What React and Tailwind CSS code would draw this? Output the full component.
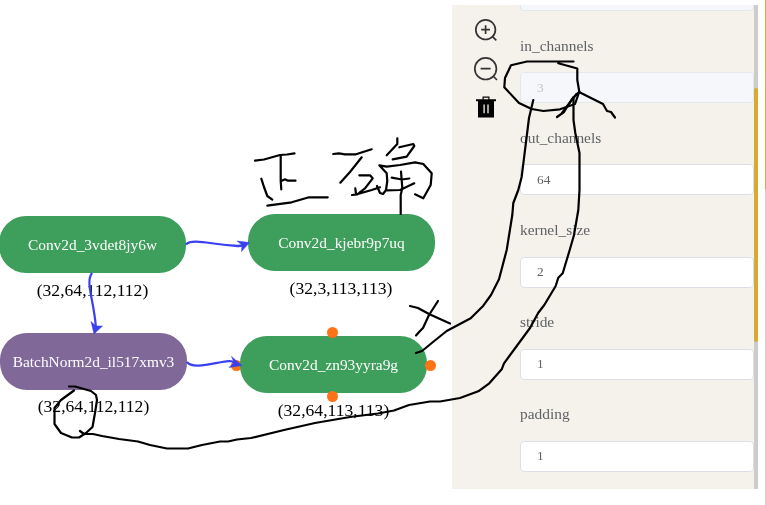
const nodes = [
  { label: 'Conv2d_3vdet8jy6w', shape: '(32,64,112,112)', box: 'left-[-1px] top-[216px] w-[187px] bg-[#3d9f5b]', text: 'left-[1px] top-[280px] w-[183px]' },
  { label: 'Conv2d_kjebr9p7uq', shape: '(32,3,113,113)', box: 'left-[248px] top-[214px] w-[187px] bg-[#3d9f5b]', text: 'left-[250px] top-[278px] w-[182px]' },
  { label: 'BatchNorm2d_il517xmv3', shape: '(32,64,112,112)', box: 'left-[0px] top-[333px] w-[187px] bg-[#806898]', text: 'left-[2px] top-[396px] w-[183px]' },
  { label: 'Conv2d_zn93yyra9g', shape: '(32,64,113,113)', box: 'left-[240px] top-[336px] w-[187px] bg-[#3d9f5b]', text: 'left-[242px] top-[400px] w-[183px]' },
];

const fields = [
  { name: 'in_channels', value: '3', disabled: true },
  { name: 'out_channels', value: '64' },
  { name: 'kernel_size', value: '2' },
  { name: 'stride', value: '1' },
  { name: 'padding', value: '1' },
];

const strokes = [
  // handwriting
  'M255 160.7L264 159.5L280 155L287 154.5L294.5 153.3',
  'M280.7 155V181L281.3 189.3M281.3 181L285 179.3L288 180.7H295.5',
  'M261.3 178.7L264 187L267.3 196L272.3 199.7',
  'M267.3 205.7L291.7 202.3L309 197.3H327.7',
  'M333.3 154L339 153.3L345 154.3H356L371.7 149.3',
  'M361.7 157.3L350 172L340.3 182.7',
  'M359.3 175.3H370L372.7 178.3L365 188.3L357.3 194.3L352 195M355.3 188.3L356 194M357 194.3L371.7 190L380 187.3',
  'M377 186L380 193L383 194L386 190L387.3 181L386.7 173.3L379.3 165.3L386.7 166.7L400 165L415 162.3L423.3 164L431.7 173.3L430.7 185L423.3 198.3L415 194.3',
  'M397.3 138.3V144L386.7 155.3',
  'M399.3 147.3L413.3 144L414.3 146L406.7 156.7L392.7 159.3',
  'M391.7 177.7L402 179.5L409.3 178.5M401 171.7L402.3 188L400.7 195V214M386.7 190.3L400 190L414.3 183.3',
  // cross
  'M410 306L418 308L429 314L440 319L450 323.5',
  'M438 301L429 315L423 328L420 331L416 335.5',
  // tensor shape ring and its long arrow
  'M69 386.5H75L91 391L96 395L97 400L95 413L92.5 427L86 433L79 437.5H72L61 433L54.5 424V408L61 400L74 390.5',
  'M80 431L84 434H93L102 436L119 439L138 441.5L150 445L167 448.5H188L202 445L220 441.5H228L237 439.5L251 438L284 430L315 423L350 417L378 413.5L394 410.5L409 405L430 401.5H440L460 398L478.3 391.3L489.3 383.3L501.7 369.3L504 363.3L530 328L538.3 312.7L544.3 305L555.7 286L558.3 277.7L562.7 273.3L570 249L574 235L578.3 210L579.5 190V153L575.3 133L573.5 120V97',
  // input ring and arrows
  'M573.5 61.5H527L511 65.3L505 78L504.3 87.3L519 103L531.7 109L543.3 111L560 109.3L575 104L579.3 91.7L577.3 80V68.5L558.3 63.3',
  'M416 353L422 351L433 342L446.7 331L470.7 318.3L483.3 305.7L491 295L499 279.3L506.7 250L512.3 215L513.3 203L518.3 190L521.7 176.7L529 118L533.3 100',
  'M557 117L564 112L572 99L579 92L603 104L607 111L611 112L615 117.5',
  'M576.5 94L568 105L562 113',
];

function Dot({ className }) {
  return <span className={'absolute size-[11px] rounded-full bg-[#ff7316] ' + className} />;
}

function Node({ node }) {
  return (
    <>
      <div className={'absolute flex h-[57px] items-center justify-center rounded-[27px] text-[15.4px] text-white ' + node.box}>
        {node.label}
      </div>
      <div className={'absolute text-center text-[17.6px] leading-[20px] text-black ' + node.text}>{node.shape}</div>
    </>
  );
}

function Zoom({ plus }) {
  return (
    <svg className="size-[26px]" viewBox="0 0 26 26" fill="none" stroke="#333" strokeWidth="1.7">
      <circle cx="12.6" cy="12.7" r={plus ? 9.8 : 10.8} />
      <path d={plus ? 'M8.2 12.7H17M12.6 8.3V17.1M19.3 19.3L23.3 23.3' : 'M7.6 12.7H17.6M20 20L24 24'} />
    </svg>
  );
}

function Trash() {
  return (
    <svg className="h-[24px] w-[22px]" viewBox="0 0 22 24">
      <path fill="#000" fillRule="evenodd" d="M7.5 0.5H14.5V3.2H21V5.2H19V21.5H3V5.2H1V3.2H7.5ZM8.7 1.7V3.2H13.3V1.7Z" />
      <path stroke="#d8d5cf" strokeWidth="1.5" d="M9.1 8.5V17.2M13 8.5V17.2" />
    </svg>
  );
}

export default function App() {
  return (
    <div className="relative flex h-[505px] w-[766px] overflow-hidden bg-white font-['Liberation_Serif',serif]">
      <main className="relative h-full w-[452px] shrink-0 will-change-transform">
        <Dot className="left-[231px] top-[360px]" />
        {nodes.map((n) => <Node key={n.label} node={n} />)}
        <Dot className="left-[327px] top-[327px]" />
        <Dot className="left-[327px] top-[391px]" />
        <Dot className="left-[425px] top-[359.5px]" />
        <svg className="absolute inset-0 size-full" fill="none" stroke="#3a40f0" strokeWidth="2.2">
          <path d="M186 244.5C191 239 207 243 222 244.5S239 247 243 245" />
          <path d="M92 273C85 282 94 300 96 328" />
          <path d="M187 362C192 369 210 364 222 362S233 362 237 364" />
          <g fill="#3a40f0" stroke="#3a40f0" strokeWidth="0.5">
            <path d="M249.5 242.5L237 241L242 245L241.5 251.5Z" />
            <path d="M94 334L91 321.5L96 326L102.5 326Z" />
            <path d="M242 365.5L231.5 356.5L234 362.5L229 367.5Z" />
          </g>
        </svg>
      </main>

      <aside className="mt-[5px] flex h-[484px] w-[302px] shrink-0 overflow-hidden bg-[#f5f2eb]">
        <div className="flex w-[68px] flex-col items-center pt-[12px]">
          <Zoom plus />
          <div className="h-[13px]" />
          <Zoom />
          <div className="h-[14px]" />
          <Trash />
        </div>
        <form className="w-[234px] will-change-transform">
          <div className="h-[6px] rounded-b-[4px] border border-t-0 border-[#e4e7ed] bg-[#f5f7fa]" />
          {fields.map((f) => (
            <label key={f.name} className="block h-[92.2px] pt-[24.6px] text-[#606266]">
              <span className="block h-[36.6px] text-[15.4px] leading-[20px]">{f.name}</span>
              <input
                className="block h-[31px] w-full rounded-[4px] border border-[#dcdfe6] bg-white px-[16px] text-[13.4px] disabled:border-[#e4e7ed] disabled:bg-[#f5f7fa] disabled:text-[#c0c4cc]"
                defaultValue={f.value}
                disabled={f.disabled}
              />
            </label>
          ))}
        </form>
      </aside>
      <div className="mt-[5px] flex h-[484px] w-[4px] flex-col bg-[#cccccc]">
        <div className="mt-[83px] h-[254px] rounded-[2px] bg-[#d8ab30]" />
      </div>
      <div className="ml-auto flex w-px flex-col bg-[#cccccc]">
        <div className="h-[189px] bg-[#d8ab30]" />
      </div>

      <svg className="pointer-events-none absolute inset-0 size-full" fill="none" stroke="#000" strokeWidth="2.2" strokeLinecap="round" strokeLinejoin="round">
        {strokes.map((d) => <path key={d} d={d} />)}
      </svg>
    </div>
  );
}
